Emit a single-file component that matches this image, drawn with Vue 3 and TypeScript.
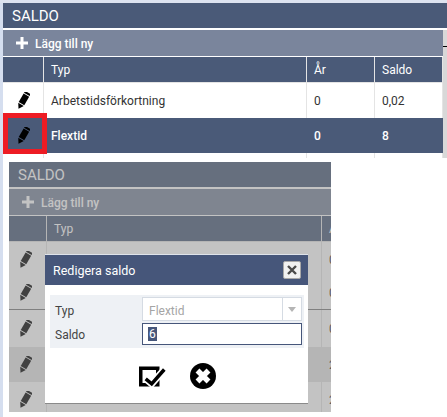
<script setup lang="ts">
interface Row {
  id: number
  typ: string
  ar: string
  saldo?: string
  state?: 'selected' | 'hover'
}

const mainRows: Row[] = [
  { id: 1, typ: 'Arbetstidsförkortning', ar: '0', saldo: '0,02' },
  { id: 2, typ: 'Flextid', ar: '0', saldo: '8', state: 'selected' }
]

// rows behind the dialog, only the start of År shows past the crop
const dimRows: Row[] = [
  { id: 1, typ: 'Arbetstidsförkortning', ar: '0' },
  { id: 2, typ: '', ar: '0' },
  { id: 3, typ: '', ar: '0' },
  { id: 4, typ: '', ar: '2', state: 'hover' },
  { id: 5, typ: '', ar: '2' }
]

const tables = [
  { id: 'main', rows: mainRows },
  { id: 'dim', rows: dimRows }
]
</script>

<template>
  <div class="page">
    <section v-for="table in tables" :key="table.id" class="panel" :class="table.id">
      <div class="panel-body">
        <h2 class="title">SALDO</h2>
        <div class="add-bar">
          <svg class="plus" viewBox="0 0 12 12"><path d="M4.5 0h3v4.5H12v3H7.5V12h-3V7.5H0v-3h4.5z" /></svg>
          <span>Lägg till ny</span>
        </div>
        <div class="head grid">
          <div></div>
          <div>Typ</div>
          <div>År</div>
          <div v-if="table.id === 'main'">Saldo</div>
        </div>
        <div v-for="row in table.rows" :key="row.id" class="row grid" :class="row.state">
          <div class="edit">
            <svg class="pencil" viewBox="0 0 14 18">
              <g transform="rotate(30 7 9)">
                <rect x="3.8" y="-0.8" width="6.4" height="2.2" />
                <rect x="3.8" y="2.2" width="6.4" height="9.8" />
                <path d="M3.8 13h6.4L7 18z" />
              </g>
            </svg>
          </div>
          <div>{{ row.typ }}</div>
          <div>{{ row.ar }}</div>
          <div v-if="table.id === 'main'">{{ row.saldo }}</div>
        </div>
        <div v-if="table.id === 'main'" class="tail grid">
          <div></div>
          <div></div>
          <div></div>
          <div></div>
        </div>
      </div>

      <template v-if="table.id === 'main'">
        <div class="scrollbar"><i></i></div>
        <div class="marker"></div>
      </template>

      <template v-else>
        <div class="veil"></div>
        <div class="dialog">
          <header class="dialog-head">
            <span>Redigera saldo</span>
            <button class="close" type="button">
              <svg viewBox="0 0 10 10"><path d="M1 1l8 8M9 1l-8 8" /></svg>
            </button>
          </header>
          <form class="form">
            <label class="label-typ">Typ</label>
            <div class="select">
              <span>Flextid</span>
              <b><i></i></b>
            </div>
            <label>Saldo</label>
            <div class="input"><span class="picked">6</span></div>
          </form>
          <div class="actions">
            <svg class="ok" viewBox="0 0 27 21">
              <path class="box" d="M1.75 2.25h17v16.5h-17z" />
              <path class="check-halo" d="M6.7 12.8l6 5L25.3 3.5" />
              <path class="check" d="M6.7 12.8l6 5L25.3 3.5" />
            </svg>
            <svg class="cancel" viewBox="0 0 26 26">
              <circle cx="13" cy="13" r="13" />
              <path d="M7.5 7.5l11 11M18.5 7.5l-11 11" />
            </svg>
          </div>
        </div>
      </template>
    </section>
  </div>
</template>

<style>
body {
  background: #fff;
}
</style>

<style scoped>
.page {
  width: 447px;
  height: 417px;
  box-sizing: border-box;
  padding: 3px 0 0 3px;
  background: linear-gradient(#dde3f0, #dde3f0) 0 0 / 100% 3px no-repeat,
    linear-gradient(#d5deef, #d5deef) 0 0 / 3px 100% no-repeat, #fff;
  font-family: Roboto, "Open Sans", sans-serif;
  font-size: 12px;
  overflow: hidden;
}

.panel {
  position: relative;
  overflow: hidden;
}

.panel.main {
  width: 444px;
  height: 155px;
}

.panel.dim {
  width: 322px;
  height: 250px;
  margin: 4px 0 0 6px;
}

.title {
  margin: 0;
  height: 25px;
  padding-left: 9px;
  background: #4a5a78;
  color: #fff;
  font-size: 15px;
  font-weight: 400;
  line-height: 27px;
}

.add-bar {
  display: flex;
  align-items: center;
  gap: 7px;
  height: 26px;
  margin-top: 2px;
  padding-left: 13px;
  background: #7a859c;
  color: #fff;
  font-weight: 500;
}

.add-bar span {
  padding-top: 2px;
}

.plus {
  width: 12px;
  height: 12px;
  fill: #fff;
}

.grid {
  display: grid;
  grid-template-columns: 41px 263px 68px 68px;
}

.dim .grid {
  grid-template-columns: 38px 275px 68px;
}

.grid > div {
  box-sizing: border-box;
  display: flex;
  align-items: center;
  padding-left: 7px;
  border-right: 1px solid #e4e4e4;
}

.head {
  height: 26px;
  margin-top: 1px;
  background: #4a5a78;
  color: #fff;
  border-bottom: 1px solid #e4e4e4;
  box-sizing: border-box;
}

.row {
  height: 35px;
  background: #fff;
  color: #333;
}

.row.selected {
  background: #4a5a78;
  color: #fff;
  font-weight: 500;
}

.row.selected > div {
  border-right-color: #4a5a78;
}

.row.hover {
  background: #e4e4e4;
}

.dim .row:nth-child(5) {
  height: 33px;
  box-sizing: border-box;
  border-bottom: 1px solid #7c7c7c;
}

.dim .row:nth-child(6) {
  height: 37px;
}

.tail {
  height: 6px;
}

.grid > .edit {
  justify-content: center;
  padding-left: 0;
}

.dim .grid > .edit {
  padding-right: 5px;
}

.pencil {
  width: 14px;
  height: 18px;
  fill: #000;
}

.scrollbar {
  position: absolute;
  top: 27px;
  right: 0;
  bottom: 0;
  width: 4px;
  background: #d8d8d8;
}

.scrollbar i {
  display: block;
  height: 1px;
  margin-top: 16px;
  background: #000;
}

.marker {
  position: absolute;
  left: 0;
  top: 110px;
  width: 44px;
  height: 41px;
  box-sizing: border-box;
  border: 5px solid #ed1c24;
}

.veil {
  position: absolute;
  inset: 0;
  background: rgba(133, 133, 133, 0.49);
}

.dialog {
  position: absolute;
  left: 36px;
  top: 93px;
  width: 263px;
  height: 149px;
  background: #fff;
  border-bottom: 1px solid #8a8a8a;
  box-sizing: border-box;
  box-shadow: 0 -1px 0 #dfe3ea;
}

.dialog-head {
  display: flex;
  align-items: center;
  justify-content: space-between;
  height: 30px;
  padding: 0 7px 0 8px;
  background: #46567a;
  color: #fff;
  font-size: 12.5px;
}

.close {
  display: flex;
  align-items: center;
  justify-content: center;
  width: 18px;
  height: 18px;
  padding: 0;
  background: #f1f1f1;
  border: 1px solid #a8a8a8;
  border-radius: 2px;
}

.close svg {
  width: 10px;
  height: 10px;
  fill: none;
  stroke: #4a4a4a;
  stroke-width: 2.4;
}

.form {
  display: grid;
  grid-template-columns: 87px 160px;
  grid-template-rows: 24px 22px;
  row-gap: 2px;
  align-items: center;
  width: 254px;
  box-sizing: border-box;
  margin: 10px 0 0 5px;
  padding: 2px 0 3px 5px;
  background: #eef1f5;
  color: #444;
}

.form label {
  padding-top: 1px;
}

.form .label-typ {
  padding-top: 4px;
}

.select,
.input {
  box-sizing: border-box;
  display: flex;
  align-items: center;
  height: 100%;
  background: #fff;
}

.select {
  justify-content: space-between;
  padding-left: 6px;
  border: 1px solid #d5dbe3;
  color: #a5a5a5;
}

.select span {
  padding-top: 3px;
}

.select b {
  display: flex;
  align-items: center;
  justify-content: center;
  width: 18px;
  height: 100%;
  border-left: 1px solid #d5dbe3;
}

.select i {
  border: 4px solid transparent;
  border-top: 5px solid #b5b5b5;
  border-bottom: 0;
}

.input {
  padding-left: 5px;
  border: 1px solid #46567a;
}

.picked {
  padding: 0 1px;
  background: #46567a;
  color: #fff;
}

.actions {
  display: flex;
  align-items: center;
  gap: 24px;
  margin: 15px 0 0 94px;
}

.ok {
  width: 27px;
  height: 21px;
}

.box {
  fill: none;
  stroke: #000;
  stroke-width: 3.5;
}

.check-halo {
  fill: none;
  stroke: #fff;
  stroke-width: 7;
}

.check {
  fill: none;
  stroke: #000;
  stroke-width: 3.5;
}

.cancel {
  width: 26px;
  height: 26px;
}

.cancel path {
  fill: none;
  stroke: #fff;
  stroke-width: 5.5;
}
</style>
